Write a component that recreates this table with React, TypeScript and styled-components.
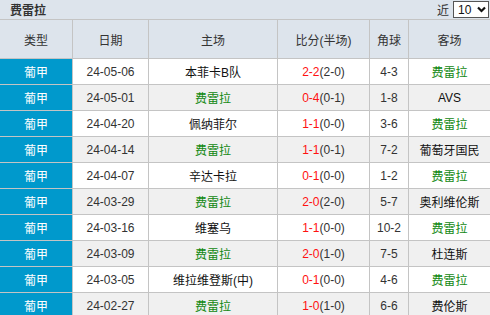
import React from 'react';
import styled, { createGlobalStyle } from 'styled-components';

const GlobalStyle = createGlobalStyle`
  html, body {
    margin: 0;
    padding: 0;
    background: #ffffff;
  }
  body {
    font-family: "Liberation Sans", "Noto Sans CJK SC", sans-serif;
    font-size: 12px;
    color: #333;
  }
`;

const Panel = styled.div`
  width: 490px;
`;

const TitleBar = styled.div`
  height: 19px;
  background: #dde4ec;
  display: flex;
  align-items: center;
  justify-content: space-between;
  padding: 0 1px 0 10px;
`;

const Title = styled.span`
  font-weight: bold;
  font-size: 12px;
  color: #333;
`;

const Picker = styled.div`
  display: flex;
  align-items: center;
  gap: 4px;
  font-size: 12px;
  color: #333;
`;

const SelectBox = styled.div`
  box-sizing: border-box;
  width: 36px;
  height: 17px;
  border: 1px solid #555;
  background: #fff;
  display: flex;
  align-items: center;
  justify-content: space-between;
  padding: 0 2px 0 4px;
  font-size: 12px;
  color: #111;
`;

const Row = styled.div<{ $head?: boolean; $alt?: boolean }>`
  display: grid;
  grid-template-columns: 72px 76px 129px 92px 39px 1fr;
  height: ${({ $head }) => ($head ? '38px' : '25px')};
  border-top: ${({ $head }) => ($head ? '1px solid #c4c4c4' : 'none')};
  border-bottom: 1px solid #c4c4c4;
  background: ${({ $head, $alt }) => ($head ? '#dde4ec' : $alt ? '#f0f0f0' : '#ffffff')};
`;

const Cell = styled.div`
  display: flex;
  align-items: center;
  justify-content: center;
  border-left: 1px solid #c4c4c4;
  white-space: nowrap;
  overflow: hidden;
  color: #333;

  &:first-child {
    border-left: none;
  }
`;

const League = styled(Cell)`
  background: #0099cc;
  color: #ffffff;
`;

const Team = styled.span<{ $me: boolean }>`
  color: ${({ $me }) => ($me ? '#118811' : '#111')};
`;

const Score = styled.span`
  color: #ff1111;
`;

type Match = {
  date: string;
  home: string;
  score: string;
  half: string;
  corner: string;
  away: string;
};

const ME = '费雷拉';

const matches: Match[] = [
  { date: '24-05-06', home: '本菲卡B队', score: '2-2', half: '(2-0)', corner: '4-3', away: ME },
  { date: '24-05-01', home: ME, score: '0-4', half: '(0-1)', corner: '1-8', away: 'AVS' },
  { date: '24-04-20', home: '佩纳菲尔', score: '1-1', half: '(0-0)', corner: '3-6', away: ME },
  { date: '24-04-14', home: ME, score: '1-1', half: '(0-1)', corner: '7-2', away: '葡萄牙国民' },
  { date: '24-04-07', home: '辛达卡拉', score: '0-1', half: '(0-0)', corner: '1-2', away: ME },
  { date: '24-03-29', home: ME, score: '2-0', half: '(2-0)', corner: '5-7', away: '奥利维伦斯' },
  { date: '24-03-16', home: '维塞乌', score: '1-1', half: '(0-0)', corner: '10-2', away: ME },
  { date: '24-03-09', home: ME, score: '2-0', half: '(1-0)', corner: '7-5', away: '杜连斯' },
  { date: '24-03-05', home: '维拉维登斯(中)', score: '0-1', half: '(0-0)', corner: '4-6', away: ME },
  { date: '24-02-27', home: ME, score: '1-0', half: '(1-0)', corner: '6-6', away: '费伦斯' },
];

const App: React.FC = () => {
  return (
    <>
      <GlobalStyle />
      <Panel>
        <TitleBar>
          <Title>费雷拉</Title>
          <Picker>
            近
            <SelectBox>
              <span>10</span>
              <svg width="9" height="7" viewBox="0 0 9 7">
                <path d="M1 1.5 L4.5 5 L8 1.5" fill="none" stroke="#111" strokeWidth="2.2" />
              </svg>
            </SelectBox>
          </Picker>
        </TitleBar>
        <Row $head>
          <Cell>类型</Cell>
          <Cell>日期</Cell>
          <Cell>主场</Cell>
          <Cell>比分(半场)</Cell>
          <Cell>角球</Cell>
          <Cell>客场</Cell>
        </Row>
        {matches.map((m, i) => (
          <Row key={m.date} $alt={i % 2 === 1}>
            <League>葡甲</League>
            <Cell>{m.date}</Cell>
            <Cell>
              <Team $me={m.home === ME}>{m.home}</Team>
            </Cell>
            <Cell>
              <Score>{m.score}</Score>
              {m.half}
            </Cell>
            <Cell>{m.corner}</Cell>
            <Cell>
              <Team $me={m.away === ME}>{m.away}</Team>
            </Cell>
          </Row>
        ))}
      </Panel>
    </>
  );
};

export default App;
